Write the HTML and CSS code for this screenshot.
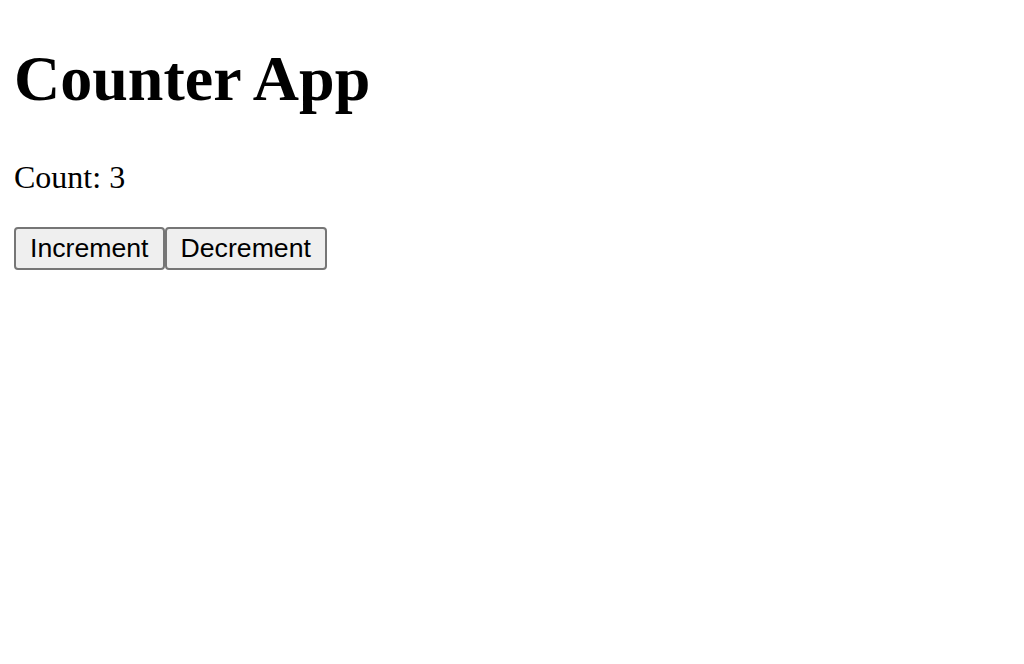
FILE: index.html
```html
<!DOCTYPE html>
<html>
<head>
<meta charset="utf-8">
<link rel="stylesheet" href="styles.css">
</head>
<body>
<div class="app">
<h1 class="title">Counter App</h1>
<p class="count">Count: 3</p>
<div class="buttons"><button class="btn">Increment</button><button class="btn">Decrement</button></div>
</div>
</body>
</html>
```
FILE: styles.css
```css
body {
  margin: 14px;
  font-family: "Liberation Serif", "Times New Roman", serif;
  color: #000;
  background: #fff;
}
.title {
  font-size: 64px;
  font-weight: bold;
  margin: 28px 0 43px;
}
.count {
  font-size: 32px;
  margin: 31px 0;
}
.buttons {
  display: flex;
}
.btn {
  font-family: "Liberation Sans", Arial, sans-serif;
  font-size: 26.67px;
  color: #000;
  background: #efefef;
  border: 2px solid #767676;
  border-radius: 4px;
  padding: 4px 14px;
  margin: 0;
}
```
